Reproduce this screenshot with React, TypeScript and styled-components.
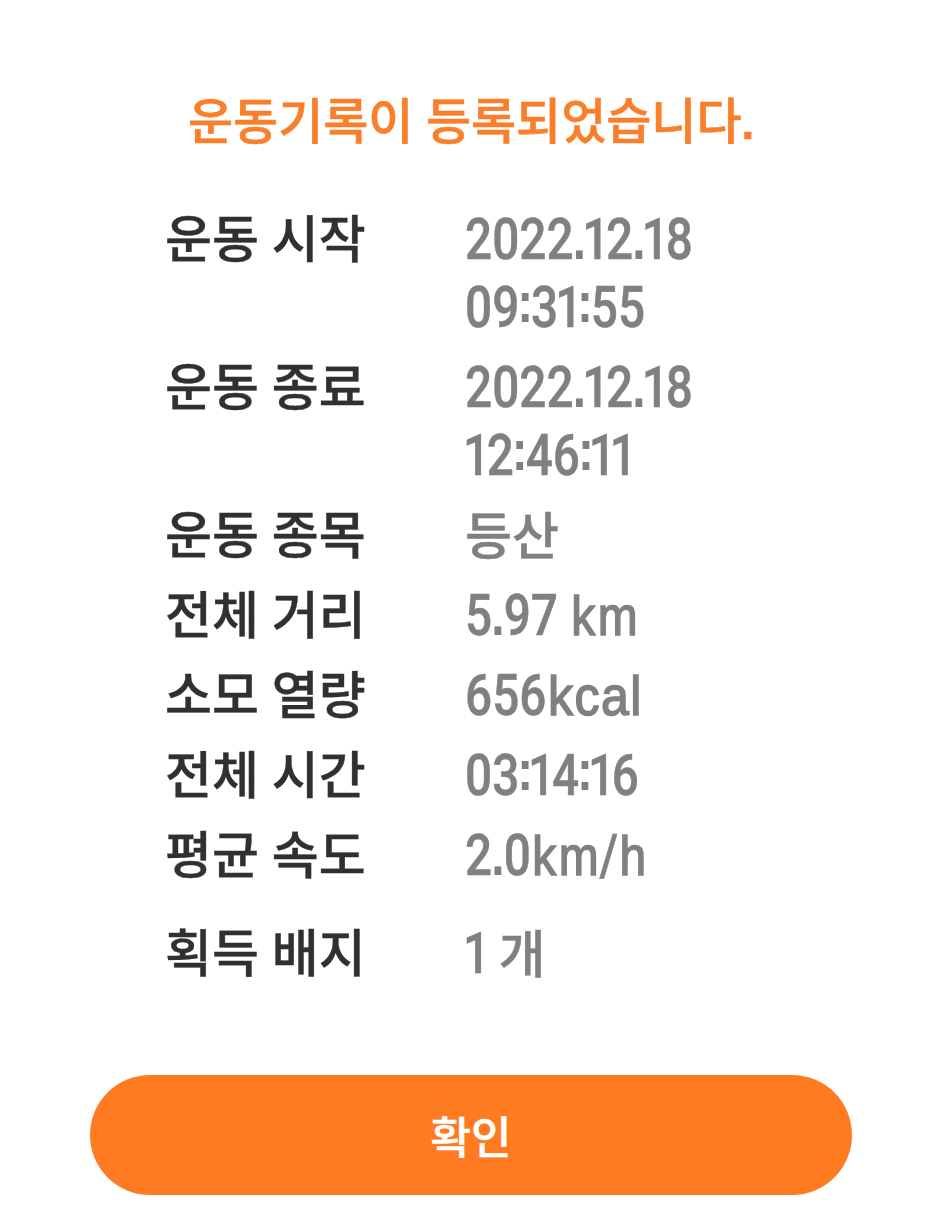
import React from 'react';
import styled, { createGlobalStyle } from 'styled-components';

const GlobalStyle = createGlobalStyle`
  * { box-sizing: border-box; }
  body { margin: 0; background: #fff; overflow: hidden; }
`;

const Page = styled.main`
  width: 938px;
  height: 1223px;
  padding-top: 83px;
  background: #fff;
  font-family: "Noto Sans CJK KR", sans-serif;
  font-weight: 500;
`;

const Title = styled.h1`
  margin: 0 0 49px 188px;
  height: 70px;
  line-height: 70px;
  font-size: 49px;
  font-weight: 500;
  word-spacing: 1.5px;
  color: #f97f2a;
  -webkit-text-stroke: 0.6px currentColor;
  white-space: nowrap;
`;

const Stop = styled.span`
  font-family: "Liberation Sans", sans-serif;
  font-weight: 700;
  font-size: 46px;
`;

const Records = styled.dl`
  margin: 0;
  padding-left: 165px;
`;

const Row = styled.div<{ $gap?: number }>`
  display: grid;
  grid-template-columns: 300px 1fr;
  margin-bottom: ${({ $gap = 12 }) => $gap}px;
`;

const Label = styled.dt`
  height: 68px;
  line-height: 69px;
  font-size: 51px;
  word-spacing: 1.5px;
  color: #303030;
  -webkit-text-stroke: 0.4px currentColor;
  white-space: nowrap;
`;

const Value = styled.dd`
  margin: 0;
  color: #808080;
`;

const HangulLine = styled.span`
  display: block;
  height: 68px;
  line-height: 70px;
  font-size: 51px;
  -webkit-text-stroke: 0.5px currentColor;
`;

const Line = styled.span<{ $inset: number }>`
  display: block;
  width: max-content;
  height: 68px;
  margin-left: ${({ $inset }) => -$inset}px;
  line-height: 75px;
  font-family: Roboto, sans-serif;
  font-weight: 500;
  font-size: 57.5px;
  white-space: pre;
  transform: scaleX(0.83);
  transform-origin: left center;
  -webkit-text-stroke: 0.5px currentColor;
`;

const Glyph = styled.span<{ $trim: number }>`
  letter-spacing: ${({ $trim }) => -$trim}px;
`;

const Dot = styled(Glyph)`
  font-family: "Liberation Sans", sans-serif;
  font-weight: 700;
  -webkit-text-stroke: 0;
`;

const Colon = styled(Dot)`
  line-height: 0;
  vertical-align: 5px;
`;

const Latin = styled.span<{ $wide: boolean }>`
  display: inline-block;
  line-height: 0;
  margin-left: 2px;
  font-family: "Liberation Sans", sans-serif;
  font-weight: 400;
  font-size: 56px;
  letter-spacing: ${({ $wide }) => ($wide ? 1.5 : 3)}px;
  transform: scaleX(${({ $wide }) => ($wide ? 1.08 : 1.03)});
  transform-origin: left center;
  -webkit-text-stroke: 1.6px currentColor;
`;

const Hangul = styled.span`
  display: inline-block;
  font-family: "Noto Sans CJK KR", sans-serif;
  font-size: 51px;
  line-height: 0;
  transform: scaleX(1.2);
  transform-origin: left center;
`;

const Confirm = styled.button`
  display: block;
  width: 762px;
  height: 120px;
  margin: 91px 0 0 90px;
  padding: 0;
  border: 0;
  border-radius: 60px;
  background: #ff7b22;
  color: #fff;
  font: 500 44px "Noto Sans CJK KR", sans-serif;
  -webkit-text-stroke: 0.5px currentColor;
`;

type Entry = { label: string; lines: string[]; gap?: number };

const entries: Entry[] = [
  { label: '운동 시작', lines: ['2022.12.18', '09:31:55'] },
  { label: '운동 종료', lines: ['2022.12.18', '12:46:11'] },
  { label: '운동 종목', lines: ['등산'] },
  { label: '전체 거리', lines: ['5.97 km'] },
  { label: '소모 열량', lines: ['656kcal'] },
  { label: '전체 시간', lines: ['03:14:16'] },
  { label: '평균 속도', lines: ['2.0km/h'], gap: 30 },
  { label: '획득 배지', lines: ['1 개'] },
];

// Side space removed from the narrow characters, as [left, right] in pixels.
const bearings: Record<string, [number, number]> = {
  '1': [3.5, 4],
  '.': [1, 1],
  ':': [2.5, 2.5],
};

function Reading({ text }: { text: string }) {
  if (/^[가-힣]+$/.test(text)) return <HangulLine>{text}</HangulLine>;
  const parts = text.match(/[a-z]+|[가-힣]+|./g) ?? [];
  return (
    <Line $inset={text.startsWith('1') ? 2.5 : 0}>
      {parts.map((part, index) => {
        const trim = (bearings[part]?.[1] ?? 0) + (bearings[parts[index + 1]]?.[0] ?? 0);
        if (/[a-z]/.test(part)) return <Latin key={index} $wide={part === 'kcal'}>{part}</Latin>;
        if (/[가-힣]/.test(part)) return <Hangul key={index}>{part}</Hangul>;
        if (part === '.') return <Dot key={index} $trim={trim}>{part}</Dot>;
        if (part === ':') return <Colon key={index} $trim={trim}>{part}</Colon>;
        return <Glyph key={index} $trim={trim}>{part}</Glyph>;
      })}
    </Line>
  );
}

export default function App() {
  return (
    <Page>
      <GlobalStyle />
      <Title>운동기록이 등록되었습니다<Stop>.</Stop></Title>
      <Records>
        {entries.map(({ label, lines, gap }) => (
          <Row key={label} $gap={gap}>
            <Label>{label}</Label>
            <Value>
              {lines.map((line) => (
                <Reading key={line} text={line} />
              ))}
            </Value>
          </Row>
        ))}
      </Records>
      <Confirm type="button">확인</Confirm>
    </Page>
  );
}
